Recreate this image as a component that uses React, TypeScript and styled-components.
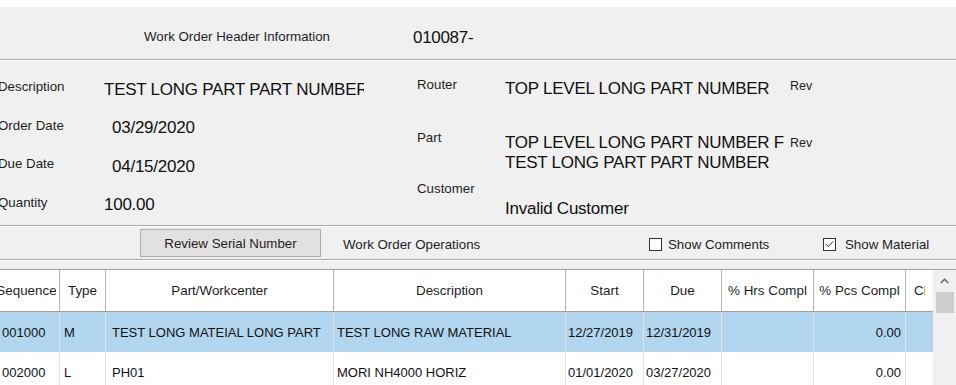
import React from 'react';
import styled, { createGlobalStyle } from 'styled-components';

const Global = createGlobalStyle`
  html, body { margin: 0; padding: 0; background: #ffffff; }
  body { font-family: "Liberation Sans", Arial, sans-serif; overflow: hidden; }
`;

const Screen = styled.div`
  padding-top: 7px;
  width: 956px;
  height: 385px;
  box-sizing: border-box;
  background: #ffffff;
  overflow: hidden;
`;

const Form = styled.div`
  height: 378px;
  background: #f0f0f0;
  color: #111;
  overflow: hidden;
`;

const TitleBar = styled.div`
  height: 52px;
  display: flex;
  align-items: flex-start;
`;

const TitleLabel = styled.span`
  margin-left: 144px;
  margin-top: 22px;
  width: 269px;
  font-size: 13.3px;
  line-height: 15px;
  color: #1e1e1e;
  white-space: nowrap;
`;

const OrderNumber = styled.span`
  margin-top: 21px;
  font-size: 17px;
  line-height: 20px;
  letter-spacing: -0.3px;
`;

const Divider = styled.div`
  border-top: 1px solid #a9a9a9;
  border-bottom: 1px solid #ffffff;
`;

const Info = styled.div`
  display: flex;
  height: 164px;
`;

const InfoLeft = styled.div`
  width: 417px;
  padding-top: 7px;
  display: grid;
  grid-auto-rows: 38.5px;
  align-content: start;
`;

const FieldRow = styled.div`
  display: flex;
  align-items: center;
`;

const FieldLabel = styled.span`
  width: 106px;
  margin-left: -2px;
  font-size: 13.3px;
  line-height: 16px;
  color: #1e1e1e;
  white-space: nowrap;
`;

const FieldValue = styled.span<{ $indent?: number }>`
  margin-left: ${(p) => p.$indent ?? 0}px;
  padding-top: 5px;
  width: ${(p) => 260 - (p.$indent ?? 0)}px;
  font-size: 17px;
  line-height: 20px;
  letter-spacing: -0.25px;
  white-space: nowrap;
  overflow: hidden;
`;

const InfoRight = styled.div`
  flex: 1;
  padding-top: 16px;
  display: grid;
  grid-template-columns: 88px 285px auto;
  grid-template-rows: 53px 51px auto;
  align-items: start;
`;

const SideLabel = styled.span`
  font-size: 13.3px;
  line-height: 16px;
  color: #1e1e1e;
  white-space: nowrap;
`;

const SideValue = styled.div<{ $offset: number }>`
  padding-top: ${(p) => p.$offset}px;
  width: 283px;
  font-size: 17px;
  line-height: 20px;
  letter-spacing: -0.25px;
  white-space: nowrap;
  overflow: hidden;
`;

const RevLabel = styled.span<{ $offset: number }>`
  padding-top: ${(p) => p.$offset}px;
  font-size: 12.5px;
  line-height: 14px;
  color: #1e1e1e;
`;

const ActionBar = styled.div`
  height: 32px;
  display: flex;
  align-items: center;
`;

const ActionButton = styled.button`
  margin-left: 140px;
  width: 181px;
  height: 28px;
  padding: 0;
  background: #e1e1e1;
  border: 1px solid #adadad;
  font-family: inherit;
  font-size: 13.3px;
  color: #1e1e1e;
`;

const SectionLabel = styled.span`
  margin-left: 22px;
  width: 306px;
  font-size: 13.3px;
  color: #1e1e1e;
  padding-top: 2px;
`;

const Check = styled.label<{ $gap: number; $width?: number }>`
  display: flex;
  align-items: center;
  gap: ${(p) => p.$gap}px;
  width: ${(p) => (p.$width ? `${p.$width}px` : 'auto')};
  font-size: 13.3px;
  color: #1e1e1e;
  padding-top: 2px;
`;

const Box = styled.span`
  width: 13px;
  height: 13px;
  box-sizing: border-box;
  border: 1px solid #333333;
  background: #ffffff;
  display: flex;
  align-items: center;
  justify-content: center;
`;

const TableArea = styled.div`
  margin-top: 8px;
  border-top: 1px solid #a0a0a0;
  display: flex;
  height: 200px;
  background: #ffffff;
`;

const Grid = styled.div`
  margin-left: -6px;
  width: 939px;
  flex: none;
`;

const COLS = '66px 46px 228px 232px 78px 78px 92px 92px 1fr';

const HeaderRow = styled.div`
  display: grid;
  grid-template-columns: ${COLS};
  height: 42px;
  box-sizing: border-box;
  border-bottom: 1px solid #a0a0a0;
`;

const HeaderCell = styled.div<{ $pad: number }>`
  border-right: 1px solid #b4b4b4;
  padding: 0 ${(p) => p.$pad}px;
  display: flex;
  align-items: center;
  min-width: 0;
  &:last-child { border-right: none; }
`;

const HeaderText = styled.div<{ $start?: boolean }>`
  flex: 1;
  min-width: 0;
  overflow: hidden;
  display: flex;
  justify-content: ${(p) => (p.$start ? 'flex-start' : 'center')};
  white-space: nowrap;
  font-size: 13.4px;
  color: #1e1e1e;
`;

const BodyRow = styled.div<{ $selected?: boolean }>`
  display: grid;
  grid-template-columns: ${COLS};
  height: 40px;
  background: ${(p) => (p.$selected ? '#b2d6f0' : '#ffffff')};
`;

const BodyCell = styled.div<{ $align: 'left' | 'right'; $pad: number }>`
  border-right: 1px solid #e3e3e3;
  display: flex;
  align-items: center;
  justify-content: ${(p) => (p.$align === 'right' ? 'flex-end' : 'flex-start')};
  padding-left: ${(p) => (p.$align === 'left' ? p.$pad : 0)}px;
  padding-right: ${(p) => (p.$align === 'right' ? p.$pad : 0)}px;
  font-size: 13px;
  color: #111;
  white-space: nowrap;
  overflow: hidden;
  &:last-child { border-right: none; }
`;

const Scrollbar = styled.div`
  width: 23px;
  flex: none;
  background: #f0f0f0;
  display: flex;
  flex-direction: column;
  align-items: center;
`;

const ScrollArrow = styled.div`
  height: 22px;
  display: flex;
  align-items: center;
  justify-content: center;
`;

const ScrollThumb = styled.div`
  width: 18px;
  height: 21px;
  background: #cdcdcd;
`;

type Col = { title: string; align: 'left' | 'right'; pad: number; headPad: number; start?: boolean };

const columns: Col[] = [
  { title: 'Sequence', align: 'left', pad: 8, headPad: 3 },
  { title: 'Type', align: 'left', pad: 4, headPad: 1 },
  { title: 'Part/Workcenter', align: 'left', pad: 6, headPad: 1 },
  { title: 'Description', align: 'left', pad: 3, headPad: 1 },
  { title: 'Start', align: 'left', pad: 2, headPad: 1 },
  { title: 'Due', align: 'left', pad: 2, headPad: 1 },
  { title: '% Hrs Compl', align: 'right', pad: 4, headPad: 1 },
  { title: '% Pcs Compl', align: 'right', pad: 4, headPad: 1 },
  { title: 'Closed', align: 'left', pad: 8, headPad: 8, start: true },
];

const rows: { cells: string[]; selected?: boolean }[] = [
  {
    selected: true,
    cells: ['001000', 'M', 'TEST LONG MATEIAL LONG PART', 'TEST LONG RAW MATERIAL', '12/27/2019', '12/31/2019', '', '0.00', ''],
  },
  {
    cells: ['002000', 'L', 'PH01', 'MORI NH4000 HORIZ', '01/01/2020', '03/27/2020', '', '0.00', ''],
  },
];

const CheckMark = () => (
  <svg width="9" height="8" viewBox="0 0 9 8">
    <polyline points="0.8,4 3.3,6.5 8.2,1.2" fill="none" stroke="#333" strokeWidth="1" />
  </svg>
);

const ChevronUp = () => (
  <svg width="9" height="6" viewBox="0 0 9 6">
    <polyline points="0.8,5 4.5,1.3 8.2,5" fill="none" stroke="#606060" strokeWidth="1.4" />
  </svg>
);

export default function App() {
  return (
    <>
      <Global />
      <Screen>
        <Form>
          <TitleBar>
            <TitleLabel>Work Order Header Information</TitleLabel>
            <OrderNumber>010087-</OrderNumber>
          </TitleBar>
          <Divider />
          <Info>
            <InfoLeft>
              <FieldRow>
                <FieldLabel>Description</FieldLabel>
                <FieldValue>TEST LONG PART PART NUMBER</FieldValue>
              </FieldRow>
              <FieldRow>
                <FieldLabel>Order Date</FieldLabel>
                <FieldValue $indent={8}>03/29/2020</FieldValue>
              </FieldRow>
              <FieldRow>
                <FieldLabel>Due Date</FieldLabel>
                <FieldValue $indent={8}>04/15/2020</FieldValue>
              </FieldRow>
              <FieldRow>
                <FieldLabel>Quantity</FieldLabel>
                <FieldValue>100.00</FieldValue>
              </FieldRow>
            </InfoLeft>
            <InfoRight>
              <SideLabel>Router</SideLabel>
              <SideValue $offset={2}>TOP LEVEL LONG PART NUMBER</SideValue>
              <RevLabel $offset={2}>Rev</RevLabel>
              <SideLabel>Part</SideLabel>
              <SideValue $offset={3}>
                TOP LEVEL LONG PART NUMBER F
                <br />
                TEST LONG PART PART NUMBER
              </SideValue>
              <RevLabel $offset={6}>Rev</RevLabel>
              <SideLabel>Customer</SideLabel>
              <SideValue $offset={18}>Invalid Customer</SideValue>
            </InfoRight>
          </Info>
          <Divider />
          <ActionBar>
            <ActionButton>Review Serial Number</ActionButton>
            <SectionLabel>Work Order Operations</SectionLabel>
            <Check $gap={6} $width={174}>
              <Box />
              Show Comments
            </Check>
            <Check $gap={9}>
              <Box>
                <CheckMark />
              </Box>
              Show Material
            </Check>
          </ActionBar>
          <Divider />
          <TableArea>
            <Grid>
              <HeaderRow>
                {columns.map((c) => (
                  <HeaderCell key={c.title} $pad={c.headPad}>
                    <HeaderText $start={c.start}>{c.title}</HeaderText>
                  </HeaderCell>
                ))}
              </HeaderRow>
              {rows.map((r, i) => (
                <BodyRow key={i} $selected={r.selected}>
                  {r.cells.map((v, j) => (
                    <BodyCell key={j} $align={columns[j].align} $pad={columns[j].pad}>
                      {v}
                    </BodyCell>
                  ))}
                </BodyRow>
              ))}
            </Grid>
            <Scrollbar>
              <ScrollArrow>
                <ChevronUp />
              </ScrollArrow>
              <ScrollThumb />
            </Scrollbar>
          </TableArea>
        </Form>
      </Screen>
    </>
  );
}
